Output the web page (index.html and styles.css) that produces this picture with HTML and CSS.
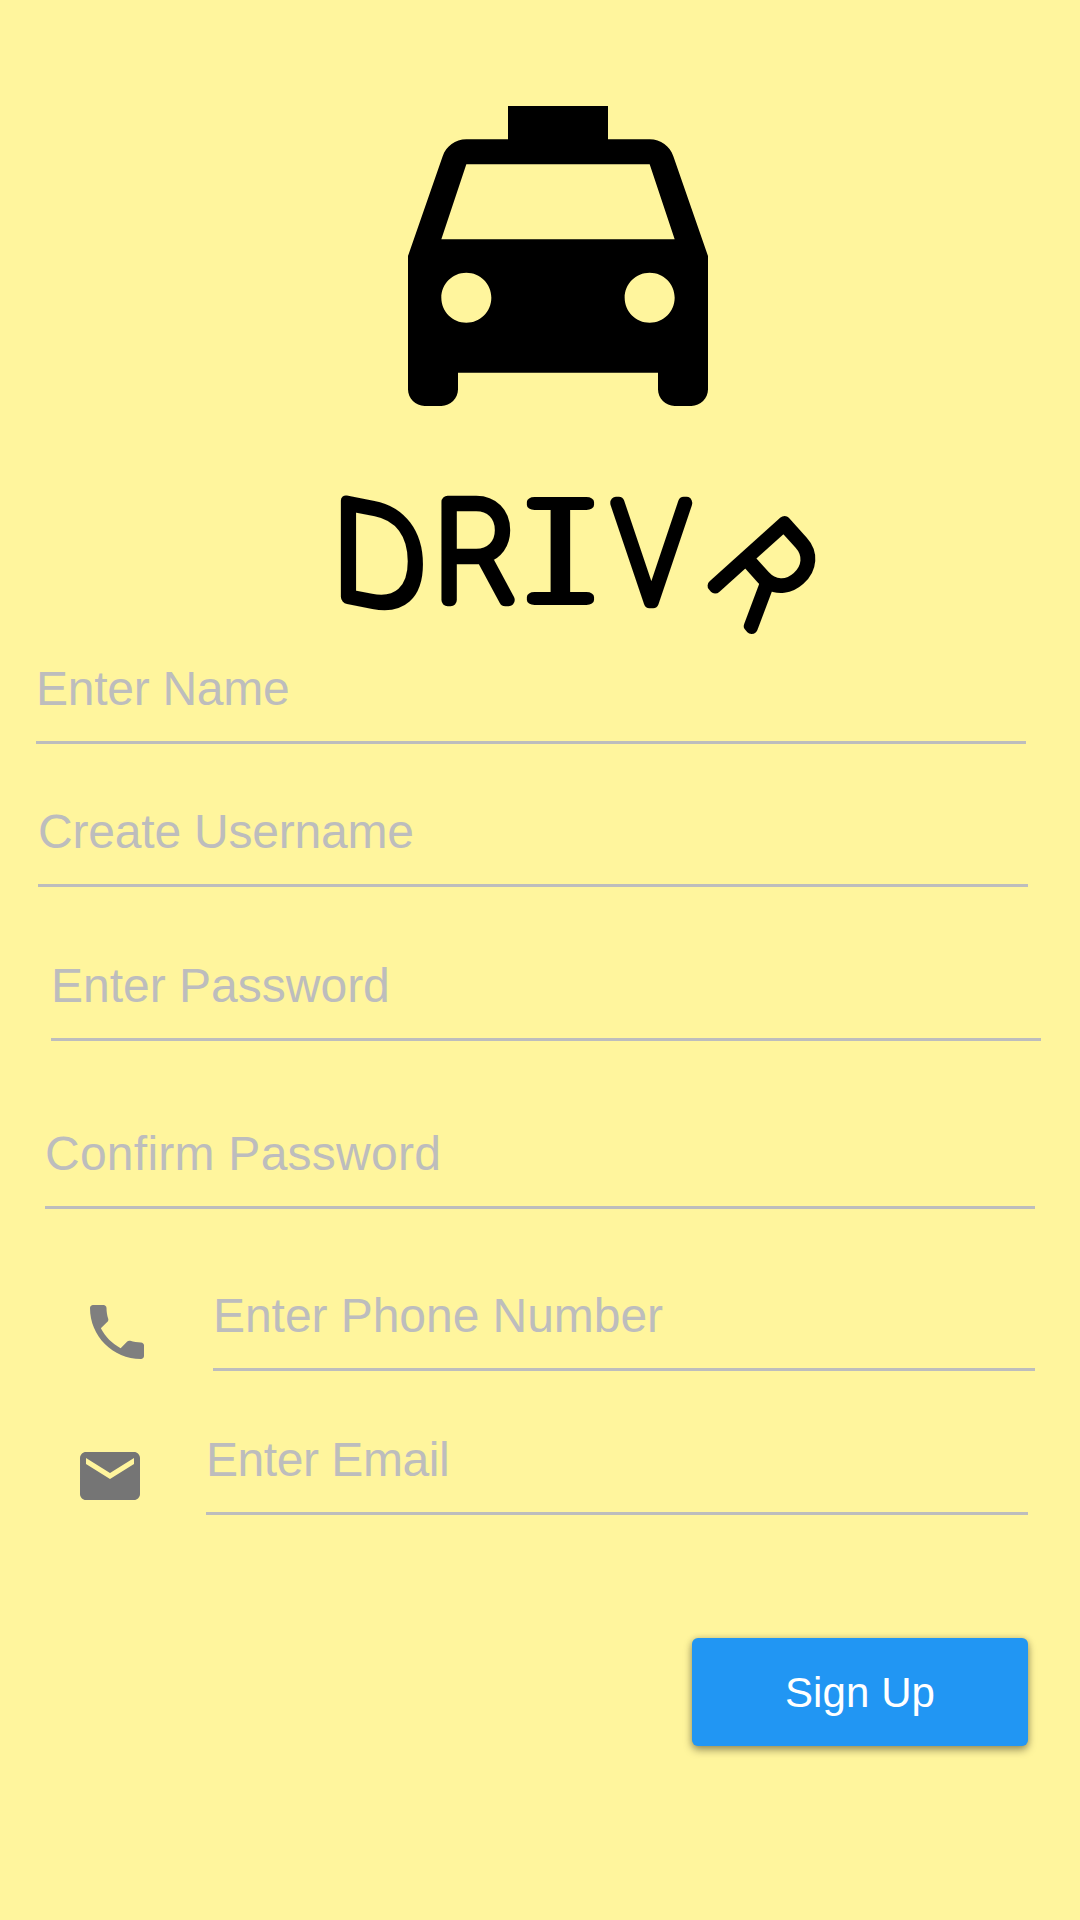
FILE: index.html
```html
<!DOCTYPE html>
<html lang="en">
<head>
<meta charset="utf-8">
<title>Drivr – Sign Up</title>
<link rel="stylesheet" href="styles.css">
</head>
<body>
<main class="screen">
  <header class="brand">
    <svg class="taxi" viewBox="0 0 24 24" aria-hidden="true"><path d="M18.92 6.01C18.72 5.42 18.16 5 17.5 5H15V3H9v2H6.5c-.66 0-1.21.42-1.42 1.01L3 12v8c0 .55.45 1 1 1h1c.55 0 1-.45 1-1v-1h12v1c0 .55.45 1 1 1h1c.55 0 1-.45 1-1v-8l-2.08-5.99zM6.5 16c-.83 0-1.5-.67-1.5-1.5S5.67 13 6.5 13s1.5.67 1.5 1.5S7.33 16 6.5 16zm11 0c-.83 0-1.5-.67-1.5-1.5s.67-1.5 1.5-1.5 1.5.67 1.5 1.5-.67 1.5-1.5 1.5zM5 11l1.5-4.5h11L19 11H5z"/></svg>
    <svg class="wordmark" viewBox="310 456 540 194" role="img" aria-label="DRIVR">
      <text transform="translate(332 595) skewY(11) scale(.98 .98)">D</text>
      <text transform="translate(432.500 599.500) scale(.99 1)">R</text>
      <text class="slab" transform="translate(522.500 600) scale(1.5 1)">I</text>
      <text transform="translate(612 602) scale(.91 1.010)">V</text>
      <text transform="translate(704 575) rotate(48) scale(.93 .97)">R</text>
    </svg>
  </header>
  <form class="form">
    <label class="field name">Enter Name</label>
    <label class="field username">Create Username</label>
    <label class="field password">Enter Password</label>
    <label class="field confirm">Confirm Password</label>
    <div class="row phone">
      <svg class="icon" viewBox="0 0 24 24" aria-hidden="true"><path d="M6.62 10.79c1.44 2.83 3.76 5.14 6.59 6.59l2.2-2.2c.27-.27.67-.36 1.02-.24 1.12.37 2.33.57 3.57.57.55 0 1 .45 1 1V20c0 .55-.45 1-1 1-9.39 0-17-7.61-17-17 0-.55.45-1 1-1h3.5c.55 0 1 .45 1 1 0 1.25.2 2.45.57 3.57.11.35.03.74-.25 1.02l-2.2 2.2z"/></svg>
      <label class="field">Enter Phone Number</label>
    </div>
    <div class="row email">
      <svg class="icon" viewBox="0 0 24 24" aria-hidden="true"><path d="M20 4H4c-1.1 0-1.99.9-1.99 2L2 18c0 1.1.9 2 2 2h16c1.1 0 2-.9 2-2V6c0-1.1-.9-2-2-2zm0 4l-8 5-8-5V6l8 5 8-5v2z"/></svg>
      <label class="field">Enter Email</label>
    </div>
    <button class="submit" type="button">Sign Up</button>
  </form>
</main>
</body>
</html>
```
FILE: styles.css
```css
* { box-sizing: border-box; }
body { margin: 0; background: #fff59d; font-family: "Liberation Sans", Arial, sans-serif; }
.screen { width: 1080px; height: 1920px; padding-top: 56px; display: flex; flex-direction: column; overflow: hidden; }
.brand { height: 594px; display: flex; flex-direction: column; flex: none; }
.taxi { width: 400px; height: 400px; margin-left: 358px; flex: none; }
.wordmark { width: 540px; height: 194px; margin-left: 310px; flex: none; overflow: visible; }
.wordmark text {
  font-family: Inter, Lato, sans-serif;
  font-size: 135px;
  font-weight: 100;
  fill: #000;
  stroke: #000;
  stroke-width: 12.5px;
  stroke-linejoin: round;
  stroke-linecap: round;
}
.wordmark .slab { font-feature-settings: "cv08" 1; stroke-width: 10px; }
.form { display: flex; flex-direction: column; }
.field {
  width: 990px;
  height: 94px;
  flex: none;
  line-height: 78px;
  border-bottom: 3px solid #bdbdbd;
  color: #bdbdbd;
  font-size: 48px;
  white-space: nowrap;
}
.name { margin-left: 36px; letter-spacing: -.27px; }
.username { margin: 49px 0 0 38px; letter-spacing: -.2px; }
.password { margin: 60px 0 0 51px; }
.confirm { margin: 74px 0 0 45px; letter-spacing: .25px; }
.row { display: flex; align-items: flex-start; }
.row .field { width: 822px; }
.icon { width: 72px; height: 72px; flex: none; margin: 19px 60px 0 0; fill: #7f7f7f; }
.phone { margin: 68px 0 0 81px; }
.phone .field { letter-spacing: -.05px; }
.email { margin: 50px 0 0 74px; }
.email .field { letter-spacing: -.45px; }
.email .icon { fill: #757575; }
.submit {
  width: 336px;
  height: 108px;
  margin: 123px 0 0 692px;
  padding: 2px 0 0;
  border: 0;
  border-radius: 6px;
  background: #2196f3;
  color: #fff;
  font: 42px "Liberation Sans", Arial, sans-serif;
  letter-spacing: .1px;
  box-shadow: 0 0 6px rgba(0,0,0,.14), 0 4px 8px rgba(0,0,0,.38);
}
```
